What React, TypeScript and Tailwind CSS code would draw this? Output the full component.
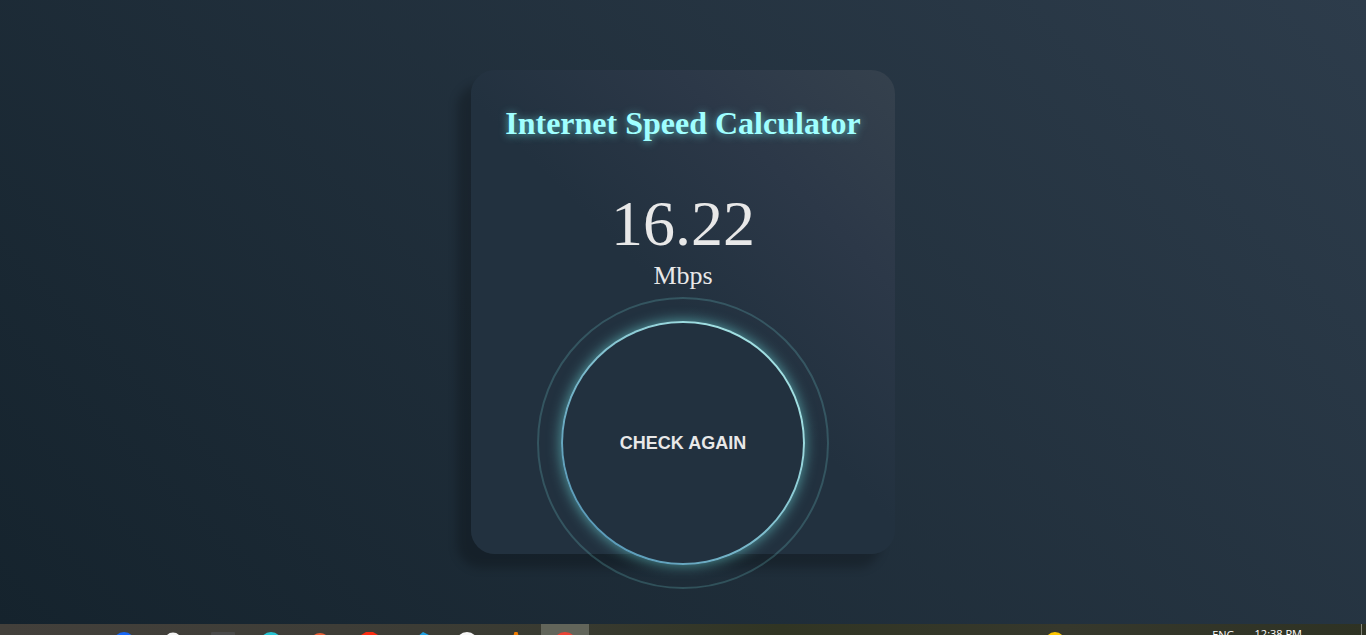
import type { ReactNode } from "react";

type TaskItem = { name: string; active?: boolean; drawing: ReactNode };

const tasks: TaskItem[] = [
  { name: "Search", drawing: <circle cx="11" cy="11" r="11" fill="#1767f5" /> },
  { name: "Assistant", drawing: <circle cx="11" cy="9" r="8.500" fill="#f5f5f5" /> },
  { name: "Task view", drawing: <rect x="0" y="0" width="24" height="24" rx="1" fill="#4a4a4a" /> },
  { name: "Edge", drawing: <circle cx="11" cy="11" r="11" fill="#27c3d2" /> },
  { name: "Firefox", drawing: <circle cx="11" cy="11" r="10" fill="#e85f35" /> },
  { name: "Opera", drawing: <path d="M8 0h7l5 3 3 5v16H0V8l3-5z" fill="#fa2c10" /> },
  { name: "Editor", drawing: <path d="M16 0l6 3v18H10V5z" fill="#1e9fe0" /> },
  { name: "GitHub", drawing: <circle cx="11" cy="11" r="11" fill="#f7f7f7" /> },
  { name: "Media player", drawing: <path d="M9.500 0h3L19 22H3z" fill="#f07c00" /> },
  { name: "Chrome", active: true, drawing: <circle cx="12" cy="12" r="12" fill="#ea4335" /> },
];

function SpeedCard() {
  return (
    <section className="flex w-full max-w-[424px] flex-col items-center rounded-3xl bg-[linear-gradient(45deg,#22313f_0%,#22313f_50%,#2c3848_76%,#35414d_100%)] px-4 pt-[33px] text-[#e8e8e8] shadow-[-14px_14px_10px_rgba(0,0,0,0.22)]">
      <h1 className="whitespace-nowrap text-[32px] font-bold leading-10 text-[#a0ffff] [text-shadow:0_1px_9px_rgba(110,230,230,0.7)]">
        Internet Speed Calculator
      </h1>
      <p className="mt-[45px] text-[64px] leading-[72px]">16.22</p>
      <p className="text-[26px] leading-8">Mbps</p>
      <div className="mt-[5px] -mb-[35px] flex size-[292px] items-center justify-center rounded-full border-2 border-[#7fe6e6]/20">
        <button
          type="button"
          className="size-[244px] cursor-pointer rounded-full border-2 border-transparent bg-[linear-gradient(#22313f,#22313f),linear-gradient(45deg,#4c8db0_0%,#a0dfe2_80%)] [background-clip:padding-box,border-box] bg-origin-border font-['Liberation_Sans',Arial,sans-serif] text-[18px] font-bold text-[#e8e8e8] shadow-[0_0_14px_rgba(110,220,220,0.65)]"
        >
          CHECK AGAIN
        </button>
      </div>
    </section>
  );
}

function Taskbar() {
  return (
    <footer className="flex h-[11px] shrink-0 items-start overflow-hidden bg-[linear-gradient(90deg,#43403b_0%,#3e3d37_25%,#383a30_42%,#313523_57%,#36382c_78%,#2e3223_100%)] font-['Open_Sans','Noto_Sans',sans-serif] text-[11px] leading-4 text-white">
      <nav aria-label="Running programs" className="ml-[100px] flex">
        {tasks.map((task) => (
          <button
            key={task.name}
            type="button"
            aria-label={task.name}
            className={
              task.active
                ? "flex h-10 w-12 justify-center bg-[#62655a] pt-2"
                : "flex h-10 w-[49px] justify-center pt-2"
            }
          >
            <svg viewBox="0 0 24 24" className="size-6" aria-hidden="true">
              {task.drawing}
            </svg>
          </button>
        ))}
      </nav>
      <div className="ml-auto flex items-start">
        <svg viewBox="0 0 20 20" className="mt-2 size-5" aria-hidden="true">
          <circle cx="10" cy="10" r="10" fill="#ffc800" />
        </svg>
        <span className="mt-[3px] ml-[147px]">ENG</span>
        <time className="mt-0.5 ml-5 whitespace-nowrap">12:38 PM</time>
        <span className="mr-1 ml-[59px] h-10 w-px bg-[#85877c]" />
      </div>
    </footer>
  );
}

export default function App() {
  return (
    <div className="flex h-screen flex-col overflow-hidden font-['Liberation_Serif','Times_New_Roman',serif]">
      <main className="flex min-h-0 flex-1 items-center justify-center bg-[linear-gradient(45deg,#15232d,#2d3c4b)]">
        <SpeedCard />
      </main>
      <Taskbar />
    </div>
  );
}
